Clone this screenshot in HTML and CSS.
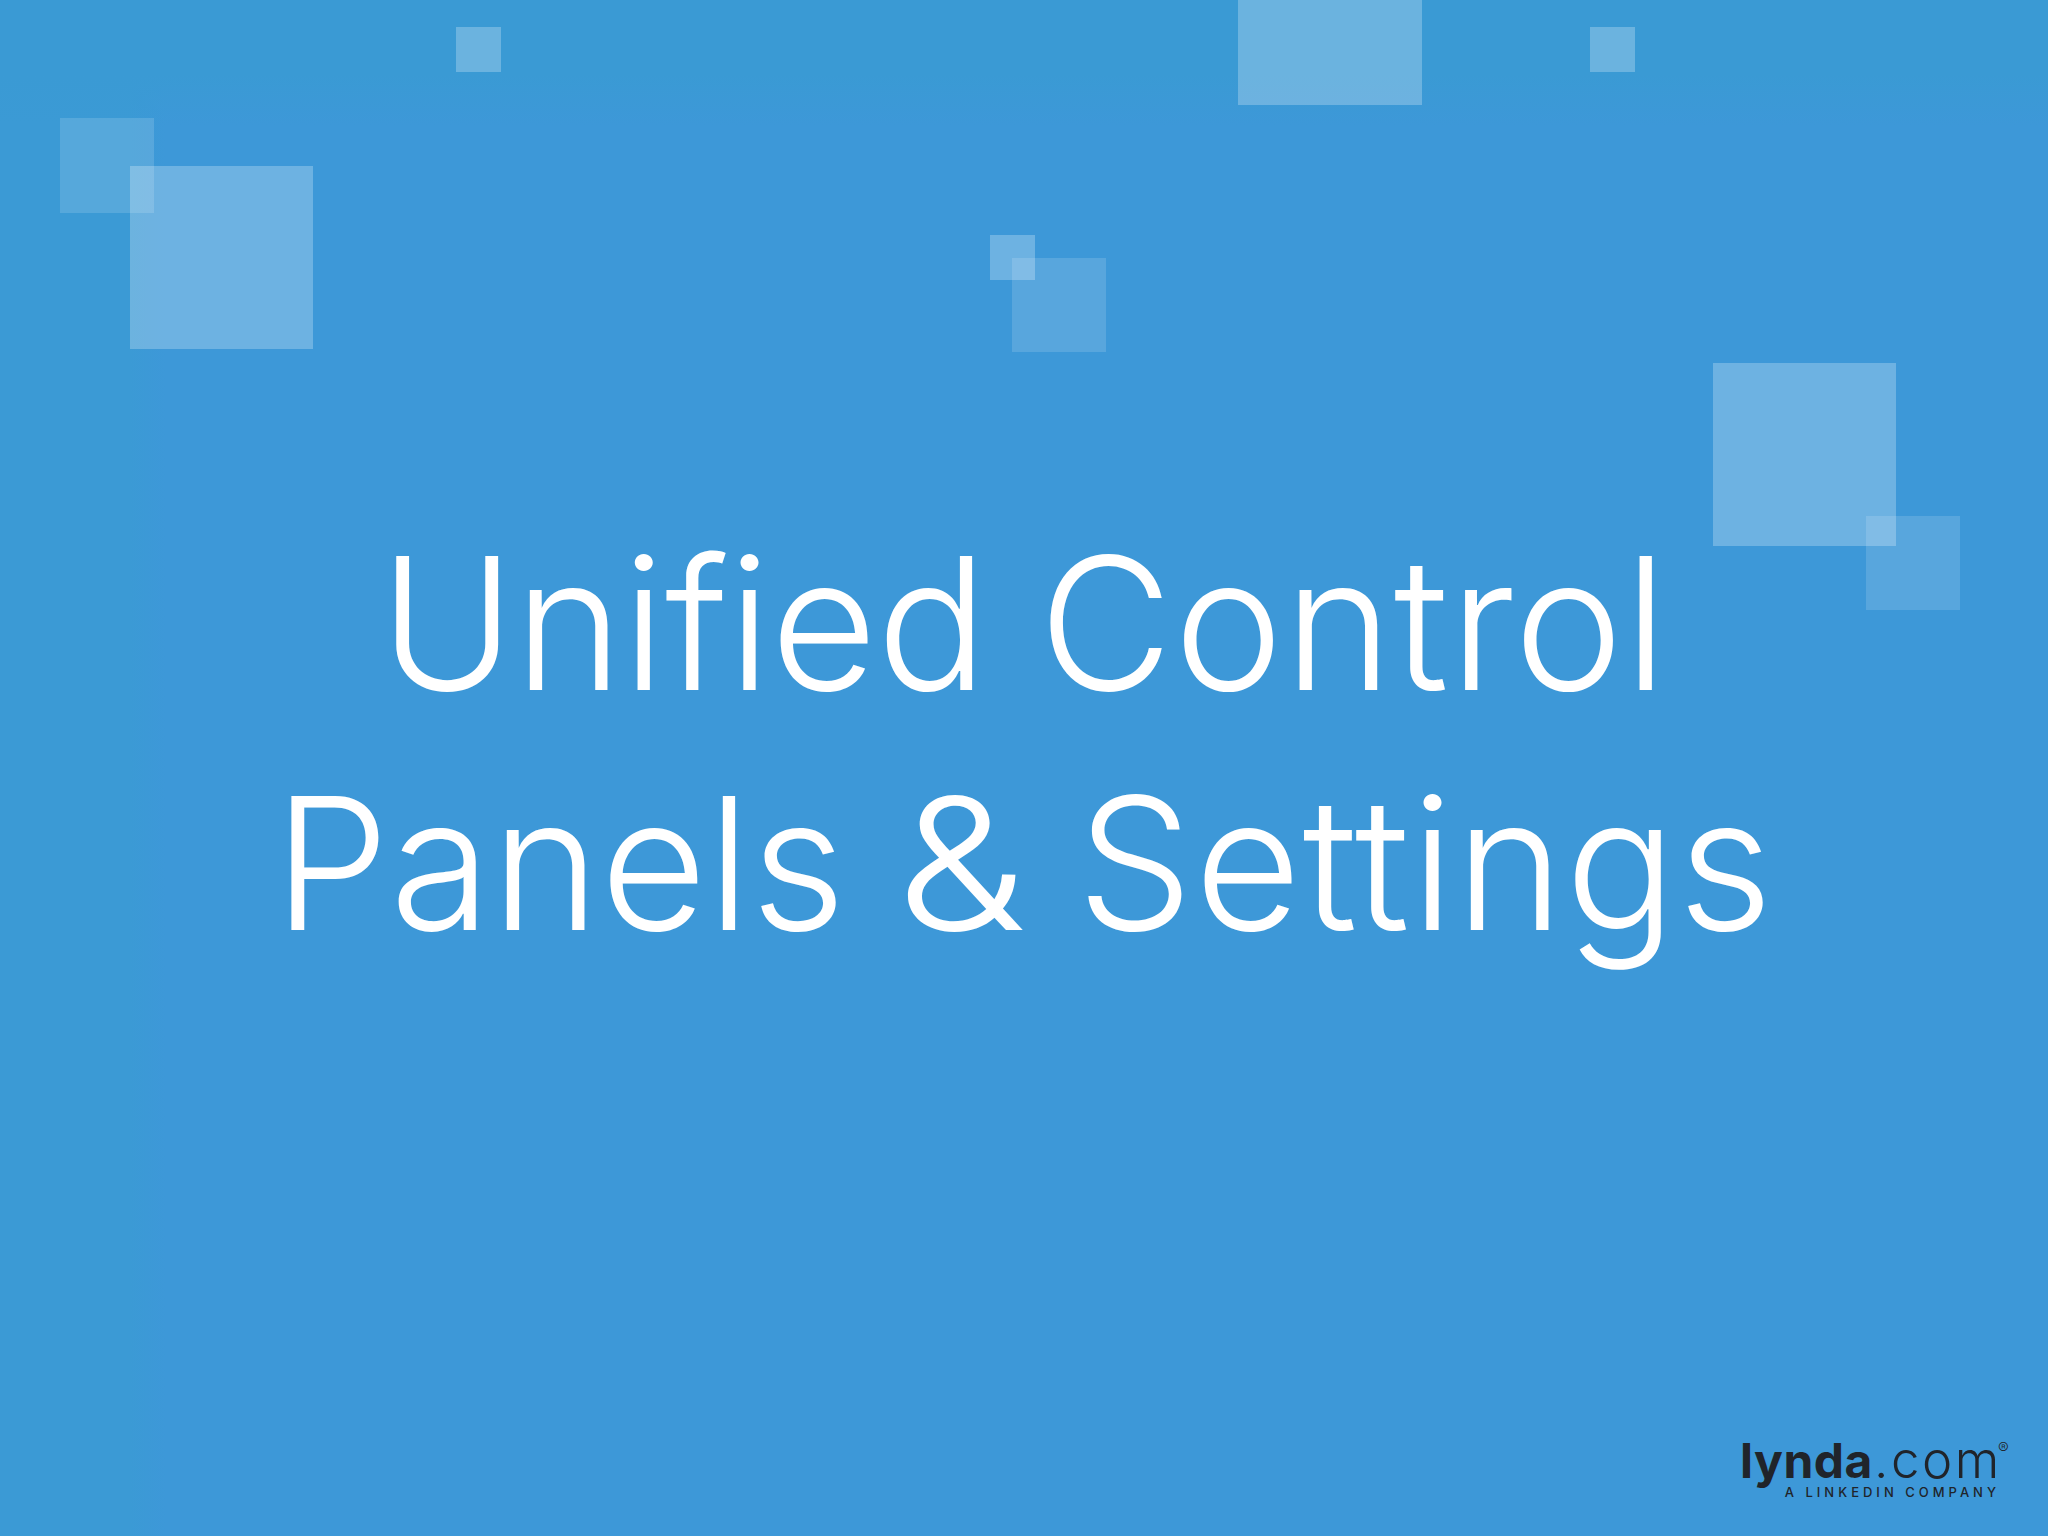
FILE: index.html
```html
<!DOCTYPE html>
<html lang="en">
<head>
<meta charset="utf-8">
<title>Unified Control Panels &amp; Settings</title>
<link rel="stylesheet" href="styles.css">
</head>
<body>
<main class="slide">
  <div class="sq sq-a"></div>
  <div class="sq sq-b"></div>
  <div class="sq sq-c"></div>
  <div class="sq sq-d"></div>
  <div class="sq sq-e"></div>
  <div class="sq sq-f"></div>
  <div class="sq sq-g"></div>
  <div class="sq sq-h"></div>
  <div class="sq sq-i"></div>
  <h1 class="title"><span class="line"><span class="w-unified">Unified</span> <span class="w-control">Control</span></span><span class="line"><span class="w-panels">Panels</span> <span class="w-amp">&amp;</span> <span class="w-settings">Settings</span></span></h1>
  <footer class="brand">
    <div class="logo">
      <div class="wordmark"><span class="wm-bold">lynda</span><span class="wm-light">.com</span><span class="reg">®</span></div>
      <div class="tagline">A LINKEDIN COMPANY</div>
    </div>
  </footer>
</main>
</body>
</html>
```
FILE: styles.css
```css
* { box-sizing: border-box; }
html, body { margin: 0; padding: 0; }
body { width: 2048px; height: 1536px; overflow: hidden; }
.slide {
  position: relative;
  width: 2048px;
  height: 1536px;
  display: flex;
  flex-direction: column;
  overflow: hidden;
  background-color: #3d98d8;
  background-image:
    linear-gradient(to bottom, #3a9ad4 0, #3a9ad4 75px, rgba(58,154,212,0) 125px),
    linear-gradient(to right, #3b9ad5 0, #3b9ad5 130px, rgba(59,154,213,0) 165px);
}
.sq { position: absolute; }
.sq-a { left: 60px; top: 118px; width: 94px; height: 95px; background: rgba(255,255,255,.14); }
.sq-b { left: 130px; top: 166px; width: 183px; height: 183px; background: rgba(255,255,255,.25); }
.sq-c { left: 456px; top: 27px; width: 45px; height: 45px; background: rgba(255,255,255,.25); }
.sq-d { left: 1238px; top: 0; width: 184px; height: 105px; background: rgba(255,255,255,.25); }
.sq-e { left: 1590px; top: 27px; width: 45px; height: 45px; background: rgba(255,255,255,.25); }
.sq-f { left: 990px; top: 235px; width: 45px; height: 45px; background: rgba(255,255,255,.25); }
.sq-g { left: 1012px; top: 258px; width: 94px; height: 94px; background: rgba(255,255,255,.14); }
.sq-h { left: 1713px; top: 363px; width: 183px; height: 183px; background: rgba(255,255,255,.25); }
.sq-i { left: 1866px; top: 516px; width: 94px; height: 94px; background: rgba(255,255,255,.14); }

.title {
  position: relative;
  margin: 0;
  padding-top: 503px;
  font-family: "Inter", "Liberation Sans", sans-serif;
  font-weight: 280;
  font-size: 184px;
  line-height: 240px;
  color: #fff;
  text-align: center;
  font-variant-ligatures: none;
}
.line { display: block; white-space: nowrap; }
.w-unified { letter-spacing: -0.4px; }
.w-control { letter-spacing: 1.2px; }
.w-panels { letter-spacing: 0.5px; }
.w-settings { letter-spacing: 1.5px; }
.w-amp { display: inline-block; margin: 0 6px; transform: scaleX(1.13); }

.brand {
  position: relative;
  margin-top: auto;
  padding: 0 52px 37px 0;
  display: flex;
  justify-content: flex-end;
}
.logo { width: 254px; color: #20242a; }
.wordmark {
  font-family: "Inter", "Liberation Sans", sans-serif;
  font-size: 48px;
  line-height: 48px;
  margin-left: -2px;
  white-space: nowrap;
  display: flex;
  align-items: baseline;
}
.wm-bold { font-weight: 700; letter-spacing: 0.5px; }
.wm-light { font-weight: 300; font-size: 51px; letter-spacing: 2.6px; margin-left: 1px; }
.reg { align-self: flex-start; margin: 4px 0 0 -4px; font-size: 16px; line-height: 16px; font-weight: 300; }
.tagline {
  font-family: "Inter", "Liberation Sans", sans-serif;
  font-weight: 500;
  font-size: 13px;
  line-height: 14px;
  letter-spacing: 4px;
  margin-right: -4px;
  text-align: right;
  white-space: nowrap;
}
```
